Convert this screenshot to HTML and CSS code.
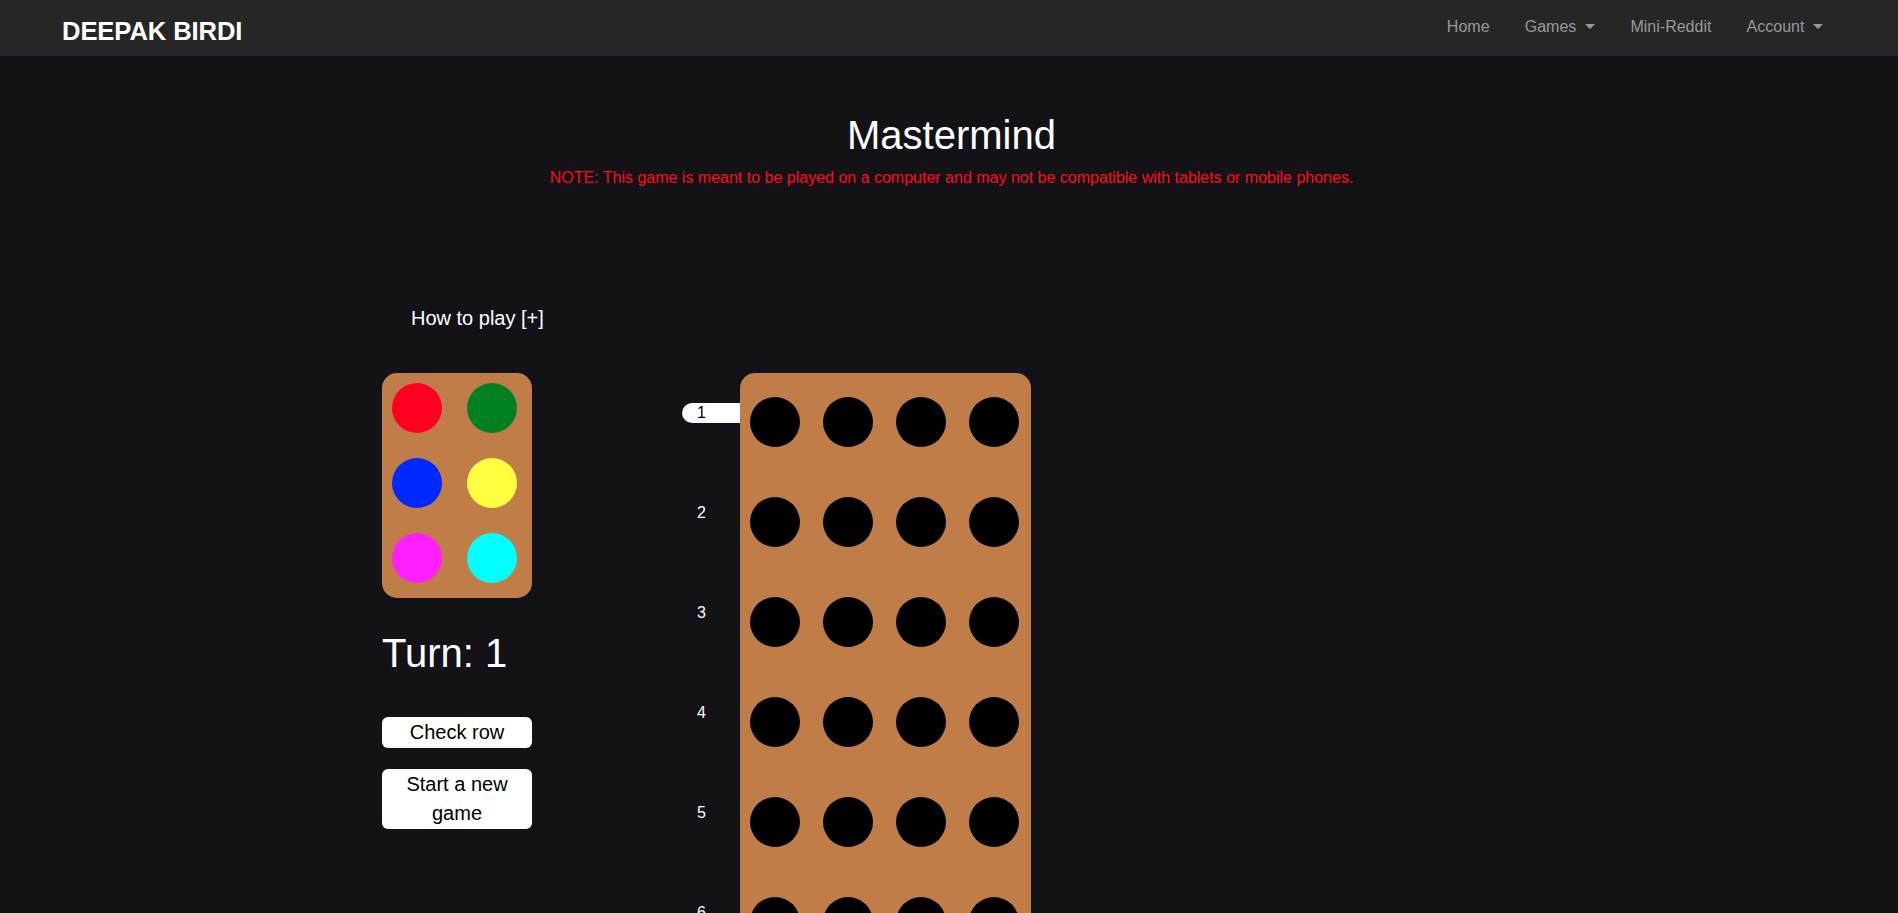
FILE: index.html
```html
<!DOCTYPE html>
<html lang="en">
<head>
<meta charset="utf-8">
<title>Mastermind</title>
<link rel="stylesheet" href="styles.css">
</head>
<body>
<nav class="navbar">
  <a class="brand" href="#">DEEPAK BIRDI</a>
  <ul class="nav-links">
    <li><a href="#">Home</a></li>
    <li><a href="#" class="dropdown">Games</a></li>
    <li><a href="#">Mini-Reddit</a></li>
    <li><a href="#" class="dropdown">Account</a></li>
  </ul>
</nav>
<main>
  <header class="heading">
    <h1 class="title">Mastermind</h1>
    <p class="note">NOTE: This game is meant to be played on a computer and may not be compatible with tablets or mobile phones.</p>
  </header>
  <div class="game">
    <div class="howto">How to play [+]</div>
    <div class="game-row">
      <div class="side">
        <div class="palette">
          <span class="peg red"></span><span class="peg green"></span>
          <span class="peg blue"></span><span class="peg yellow"></span>
          <span class="peg magenta"></span><span class="peg cyan"></span>
        </div>
        <h2 class="turn">Turn: 1</h2>
        <button class="btn">Check row</button>
        <button class="btn">Start a new game</button>
      </div>
      <div class="labels">
        <div class="label active">1</div>
        <div class="label">2</div>
        <div class="label">3</div>
        <div class="label">4</div>
        <div class="label">5</div>
        <div class="label">6</div>
        <div class="label">7</div>
        <div class="label">8</div>
        <div class="label">9</div>
        <div class="label">10</div>
      </div>
      <div class="board">
        <div class="row"><span class="hole"></span><span class="hole"></span><span class="hole"></span><span class="hole"></span></div>
        <div class="row"><span class="hole"></span><span class="hole"></span><span class="hole"></span><span class="hole"></span></div>
        <div class="row"><span class="hole"></span><span class="hole"></span><span class="hole"></span><span class="hole"></span></div>
        <div class="row"><span class="hole"></span><span class="hole"></span><span class="hole"></span><span class="hole"></span></div>
        <div class="row"><span class="hole"></span><span class="hole"></span><span class="hole"></span><span class="hole"></span></div>
        <div class="row"><span class="hole"></span><span class="hole"></span><span class="hole"></span><span class="hole"></span></div>
        <div class="row"><span class="hole"></span><span class="hole"></span><span class="hole"></span><span class="hole"></span></div>
        <div class="row"><span class="hole"></span><span class="hole"></span><span class="hole"></span><span class="hole"></span></div>
        <div class="row"><span class="hole"></span><span class="hole"></span><span class="hole"></span><span class="hole"></span></div>
        <div class="row"><span class="hole"></span><span class="hole"></span><span class="hole"></span><span class="hole"></span></div>
      </div>
    </div>
  </div>
</main>
</body>
</html>
```
FILE: styles.css
```css
* { box-sizing: border-box; }
html, body {
  margin: 0;
  background: #131217;
  color: #fff;
  font-family: "Liberation Sans", Arial, sans-serif;
}
.navbar {
  height: 56px;
  background: #262626;
  display: flex;
  justify-content: space-between;
  align-items: flex-start;
  padding: 0 57px 0 62px;
}
.brand {
  margin-top: 17px;
  font-size: 25.6px;
  line-height: 28px;
  font-weight: bold;
  letter-spacing: -0.1px;
  color: #fff;
  text-decoration: none;
}
.nav-links {
  list-style: none;
  margin: 15px 0 0;
  padding: 0;
  display: flex;
}
.nav-links a {
  display: block;
  padding: 0 17.6px;
  font-size: 16px;
  line-height: 24px;
  color: #999999;
  text-decoration: none;
}
.nav-links .dropdown::after {
  content: "";
  display: inline-block;
  vertical-align: 3px;
  margin-left: 9px;
  border-top: 5px solid #999999;
  border-left: 5px solid transparent;
  border-right: 5px solid transparent;
}
.heading {
  padding-left: 5px;
}
.title {
  margin: 55px 0 7px;
  text-align: center;
  font-size: 40px;
  line-height: 48px;
  font-weight: normal;
}
.note {
  margin: 0;
  text-align: center;
  color: #ff0a1e;
  font-size: 16px;
  line-height: 24px;
}
.game {
  margin-left: 382px;
  padding-top: 113px;
}
.howto {
  margin-left: 29px;
  font-size: 20px;
  line-height: 30px;
}
.game-row {
  display: flex;
  align-items: flex-start;
  margin-top: 40px;
}
.side {
  width: 150px;
  display: flex;
  flex-direction: column;
}
.palette {
  width: 150px;
  height: 225px;
  background: #c07d48;
  border-radius: 15px;
  display: grid;
  grid-template-columns: 75px 75px;
  grid-auto-rows: 75px;
}
.peg {
  width: 50px;
  height: 50px;
  border-radius: 50%;
  margin: 10px 0 0 10px;
}
.red { background: #ff0020; }
.green { background: #008020; }
.blue { background: #0028ff; }
.yellow { background: #ffff40; }
.magenta { background: #ff20ff; }
.cyan { background: #00ffff; }
.turn {
  margin: 31px 0 40px;
  font-size: 40px;
  line-height: 48px;
  font-weight: normal;
  white-space: nowrap;
}
.btn {
  width: 150px;
  padding: 1px 10px;
  border: 0;
  border-radius: 6px;
  background: #fff;
  color: #000;
  font-family: "Liberation Sans", Arial, sans-serif;
  font-size: 20px;
  line-height: 29px;
  margin-bottom: 21px;
}
.labels {
  margin-left: 150px;
  width: 58px;
  padding-top: 30px;
  display: flex;
  flex-direction: column;
  gap: 80px;
}
.label {
  height: 20px;
  padding-left: 15px;
  font-size: 16px;
  line-height: 20px;
  color: #fff;
}
.label.active {
  background: #fff;
  color: #000;
  border-radius: 10px 0 0 10px;
}
.board {
  width: 291px;
  background: #c07d48;
  border-radius: 15px;
  padding: 24px 12px 0 10px;
}
.row {
  display: flex;
  gap: 23px;
  height: 100px;
}
.hole {
  width: 50px;
  height: 50px;
  border-radius: 50%;
  background: #000;
}
```
